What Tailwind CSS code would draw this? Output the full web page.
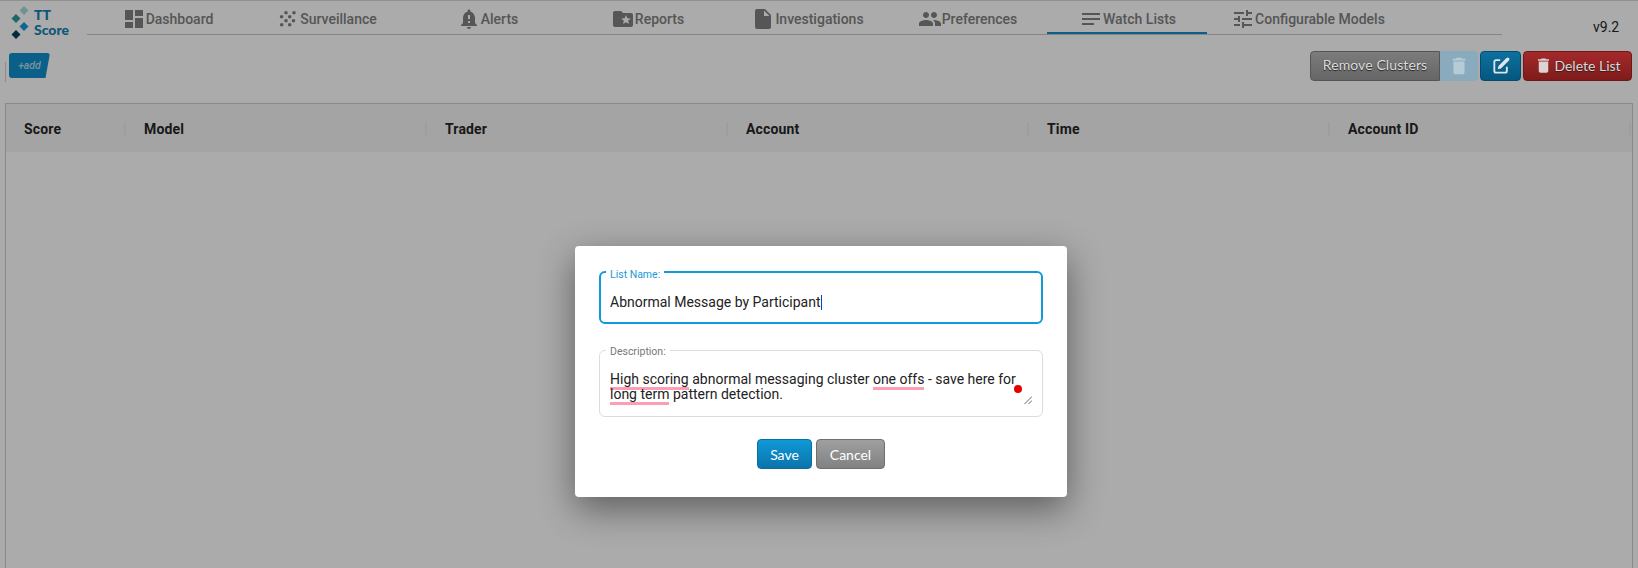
<!DOCTYPE html>
<html>
<head>
<meta charset="utf-8">
<script src="https://cdn.jsdelivr.net/npm/@tailwindcss/browser@4"></script>
</head>
<body class="bg-white overflow-hidden font-['Roboto',sans-serif]">
<div class="relative h-[568px] w-[1638px] overflow-hidden">
  <!-- page -->
  <header class="flex h-[36px] border-t border-[#d8d8d8]">
    <div class="w-[87px] relative shrink-0">
      <svg class="absolute left-[5px] top-[3px]" width="26" height="36" viewBox="0 0 26 36">
        <path d="M14.500 6.500l4.500-4.500 4.500 4.500-4.500 4.500z" fill="#a5dcdc"/>
        <path d="M6.500 14.500l4.500-4.500 4.500 4.500-4.500 4.500z" fill="#2e9c9c"/>
        <path d="M14.500 22.500l4.500-4.500 4.500 4.500-4.500 4.500z" fill="#149ad6"/>
        <path d="M6.500 30.500l4.500-4.500 4.500 4.500-4.500 4.500z" fill="#06415e"/>
      </svg>
      <div class="absolute left-[34px] top-[6px] font-['Lato',sans-serif] font-black text-[14px] leading-[15px] text-[#1482b5]">TT<br>Score</div>
    </div>
    <nav class="flex h-[34px] w-[1415px] border-b border-[#c8c8c8] text-[14px] font-medium text-[#808080]">
      <a class="w-[160px] h-full flex items-center justify-center pl-[1px] pt-[4px]"><svg class="-mt-[1px]" width="24" height="24" viewBox="0 0 24 24" fill="#808080"><path d="M3 13h8V3H3v10zm0 8h8v-6H3v6zm10 0h8V11h-8v10zm0-18v6h8V3h-8z"/></svg><span>Dashboard</span></a>
      <a class="w-[160px] h-full flex items-center justify-center pl-[2px] pt-[4px]"><svg class="mr-[3px] -mt-[1px]" width="18" height="18" viewBox="0 0 18 18" fill="#808080"><circle cx="7" cy="2.800" r="1.800"/><circle cx="15" cy="2.800" r="1.800"/><circle cx="2.600" cy="6.800" r="1.800"/><circle cx="10.700" cy="6.800" r="1.800"/><circle cx="7" cy="10.800" r="1.800"/><circle cx="14.500" cy="10.800" r="1.800"/><circle cx="2.700" cy="14.800" r="1.800"/><circle cx="10.700" cy="14.800" r="1.800"/></svg><span>Surveillance</span></a>
      <a class="w-[160px] h-full flex items-center justify-center pl-[1px] pt-[4px]"><svg class="-mt-[1px]" width="24" height="24" viewBox="0 0 24 24" fill="#808080"><path d="M18 16v-5c0-3.070-1.630-5.640-4.500-6.320V4c0-.83-.67-1.500-1.500-1.500s-1.500.67-1.500 1.500v.68C7.640 5.360 6 7.920 6 11v5l-2 2v1h16v-1l-2-2zm-5 0h-2v-2h2v2zm0-4h-2V8h2v4zm-1 10c1.100 0 2-.9 2-2h-4c0 1.100.9 2 2 2z"/></svg><span>Alerts</span></a>
      <a class="w-[160px] h-full flex items-center justify-center pl-[1px] pt-[4px]"><svg class="-mt-[1px]" width="24" height="24" viewBox="0 0 24 24" fill="#808080"><path d="M20 6h-8l-2-2H4c-1.100 0-1.990.9-1.990 2L2 18c0 1.100.9 2 2 2h16c1.100 0 2-.9 2-2V8c0-1.100-.9-2-2-2zm-2.060 11L15 15.280 12.060 17l.78-3.330-2.590-2.240 3.410-.29L15 8l1.340 3.140 3.410.29-2.590 2.240.78 3.330z"/></svg><span>Reports</span></a>
      <a class="w-[160px] h-full flex items-center justify-center pl-[1px] pt-[4px]"><svg class="-mt-[1px]" width="24" height="24" viewBox="0 0 24 24" fill="#808080"><path d="M6 2c-1.100 0-2 .9-2 2v16c0 1.100.9 2 2 2h12c1.100 0 2-.9 2-2V8l-6-6H6zm7 7V3.500L18.500 9H13z"/></svg><span>Investigations</span></a>
      <a class="w-[160px] h-full flex items-center justify-center pl-[1px] pt-[4px]"><svg class="-mt-[1px]" width="24" height="24" viewBox="0 0 24 24" fill="#808080"><path d="M16 11c1.660 0 2.990-1.340 2.990-3S17.660 5 16 5c-1.660 0-3 1.340-3 3s1.340 3 3 3zm-8 0c1.660 0 2.990-1.340 2.990-3S9.660 5 8 5C6.340 5 5 6.340 5 8s1.340 3 3 3zm0 2c-2.330 0-7 1.170-7 3.500V19h14v-2.500c0-2.330-4.670-3.500-7-3.500zm8 0c-.29 0-.62.02-.97.05 1.160.84 1.970 1.970 1.970 3.450V19h6v-2.500c0-2.330-4.670-3.500-7-3.500z"/></svg><span>Preferences</span></a>
      <a class="w-[160px] h-full flex items-center justify-center pl-[1px] pt-[6px] border-b-2 border-[#0f8fcb]"><svg class="-mt-[1px]" width="24" height="24" viewBox="0 0 24 24" fill="#808080"><path d="M21 11.010L3 11v2h18zM3 16h12v2H3zM21 6H3v2.010L21 8z"/></svg><span>Watch Lists</span></a>
      <a class="w-[200px] h-full flex items-center justify-center pl-[2px] pt-[4px]"><svg class="-mt-[1px]" width="24" height="24" viewBox="0 0 24 24" fill="#808080"><path d="M3 17v2h6v-2H3zM3 5v2h10V5H3zm10 16v-2h8v-2h-8v-2h-2v6h2zM7 9v2H3v2h4v2h2V9H7zm14 4v-2H11v2h10zm-6-4h2V7h4V5h-4V3h-2v6z"/></svg><span>Configurable Models</span></a>
    </nav>
    <div class="ml-[91px] pt-[18px] text-[14px] leading-[16px] text-[#262626]">v9.2</div>
  </header>

  <div class="flex items-start justify-between h-[67px] pl-[5px] pr-[6px]">
    <div class="flex">
      <div class="w-px h-[20px] mt-[26px] bg-[#d0d0d0]"></div>
      <button class="ml-[3px] mt-[17px] h-[25px] w-[41px] rounded-[3px] bg-[#108fcb] text-[10.500px] italic font-medium text-white/70 [clip-path:polygon(0_0,100%_0,89%_100%,0_100%)]">+add</button>
    </div>
    <div class="relative z-10 flex mt-[15px] h-[30px] font-['Lato',sans-serif] text-[14px]">
      <button class="w-[130px] pb-[3px] rounded-l-[4px] border border-[#555] bg-gradient-to-b from-[#7c7c7c] to-[#666666] text-[#dcdcdc] tracking-[0.1px] [text-shadow:0_1px_1px_#222]">Remove Clusters</button>
      <button class="w-[38px] flex items-center justify-center rounded-r-[4px] bg-[#8aabbd]"><svg width="22" height="22" viewBox="0 0 24 24" fill="#b5cbd6"><path d="M6 19c0 1.100.9 2 2 2h8c1.100 0 2-.9 2-2V7H6v12zM19 4h-3.500l-1-1h-5l-1 1H5v2h14V4z"/></svg></button>
      <button class="ml-[2px] w-[41px] flex items-center justify-center rounded-[4px] border border-[#064a6c] bg-gradient-to-b from-[#0c719f] to-[#05577e]"><svg width="20" height="20" viewBox="0 0 24 24" fill="none"><path d="M11 5H6a2 2 0 0 0-2 2v11a2 2 0 0 0 2 2h11a2 2 0 0 0 2-2v-5" stroke="#dfe6ea" stroke-width="2.200"/><path d="M18.500 2.500a2.100 2.100 0 0 1 3 3L12 15l-4 1 1-4z" fill="#dfe6ea"/></svg></button>
      <button class="ml-[2px] w-[109px] pb-[2px] flex items-center justify-center gap-[1px] rounded-[4px] border border-[#6f1616] bg-gradient-to-b from-[#a42a2a] to-[#801b1b] text-[#dfd6d6] [text-shadow:0_1px_1px_#222]"><svg width="19" height="19" viewBox="0 0 24 24" fill="#dcd4d4"><path d="M6 19c0 1.100.9 2 2 2h8c1.100 0 2-.9 2-2V7H6v12zM19 4h-3.500l-1-1h-5l-1 1H5v2h14V4z"/></svg>Delete List</button>
    </div>
  </div>

  <section class="ml-[5px] mr-[5px] h-[470px] border border-[#cecece]">
    <div class="flex h-[48px] items-center bg-[#f5f5f5] text-[14px] font-bold tracking-[0.15px] text-[#262626] pt-[2px]">
      <div class="w-[120px] pl-[18px] h-[14px] leading-[14px] border-r-2 border-[#e7edf5]">Score</div>
      <div class="w-[301px] pl-[18px] h-[14px] leading-[14px] border-r-2 border-[#e7edf5]">Model</div>
      <div class="w-[301px] pl-[18px] h-[14px] leading-[14px] border-r-2 border-[#e7edf5]">Trader</div>
      <div class="w-[301px] pl-[18px] h-[14px] leading-[14px] border-r-2 border-[#e7edf5]">Account</div>
      <div class="w-[301px] pl-[18px] h-[14px] leading-[14px] border-r-2 border-[#e7edf5]">Time</div>
      <div class="w-[301px] pl-[18px] h-[14px] leading-[14px] border-r-2 border-[#e7edf5]">Account ID</div>
    </div>
  </section>

  <!-- overlay -->
  <div class="absolute inset-0 bg-black/33"></div>

  <!-- dialog -->
  <div class="absolute z-20 left-[575px] top-[246px] h-[251px] w-[492px] rounded-[4px] bg-white px-[24px] pt-[20px] shadow-[0_12px_36px_rgba(0,0,0,0.45)]">
    <fieldset class="h-[58px] rounded-[6px] border-2 border-[#0f9ad8] px-[4px]">
      <legend class="ml-[1px] px-[4px] text-[10.500px] leading-[12px] text-[#1a9ad6] translate-y-[3px]">List Name:</legend>
      <div class="flex items-center mt-[15px] pl-[5px] text-[14px] leading-[18px] text-[#222]">Abnormal Message by Participant<span class="inline-block h-[15px] w-px bg-[#1a3fb5]"></span></div>
    </fieldset>
    <fieldset class="relative mt-[20px] h-[73px] rounded-[6px] border border-[#dcdcdc] px-[5px]">
      <legend class="ml-[1px] px-[4px] text-[10.500px] leading-[12px] text-[#777] translate-y-[2px]">Description:</legend>
      <div class="mt-[16px] pl-[5px] text-[14px] leading-[15px] text-[#222]"><span class="border-b-[3px] border-[#ff9db2]">High scoring</span> abnormal messaging cluster <span class="border-b-[3px] border-[#ff9db2]">one offs</span> - save here for<br><span class="border-b-[3px] border-[#ff9db2]">long term</span> pattern detection.</div>
      <span class="absolute left-[414px] top-[29px] h-[8px] w-[8px] rounded-full bg-[#e60000]"></span>
      <svg class="absolute left-[424px] top-[40px]" width="8" height="8" viewBox="0 0 8 8" stroke="#666" stroke-width="1" fill="none"><path d="M0.500 8L8 0.500M4.500 8L8 4.500"/></svg>
    </fieldset>
    <div class="mt-[22px] flex justify-center gap-[4px] font-['Lato',sans-serif] text-[14px] text-white [text-shadow:0_1px_1px_rgba(0,0,0,0.6)]">
      <button class="h-[30px] w-[55px] rounded-[4px] border border-[#0b6d9e] bg-gradient-to-b from-[#0f9ad8] to-[#0a74ab]">Save</button>
      <button class="h-[30px] w-[69px] rounded-[4px] border border-[#6f6f6f] bg-gradient-to-b from-[#a0a0a0] to-[#818181]">Cancel</button>
    </div>
  </div>
</div>
</body>
</html>
